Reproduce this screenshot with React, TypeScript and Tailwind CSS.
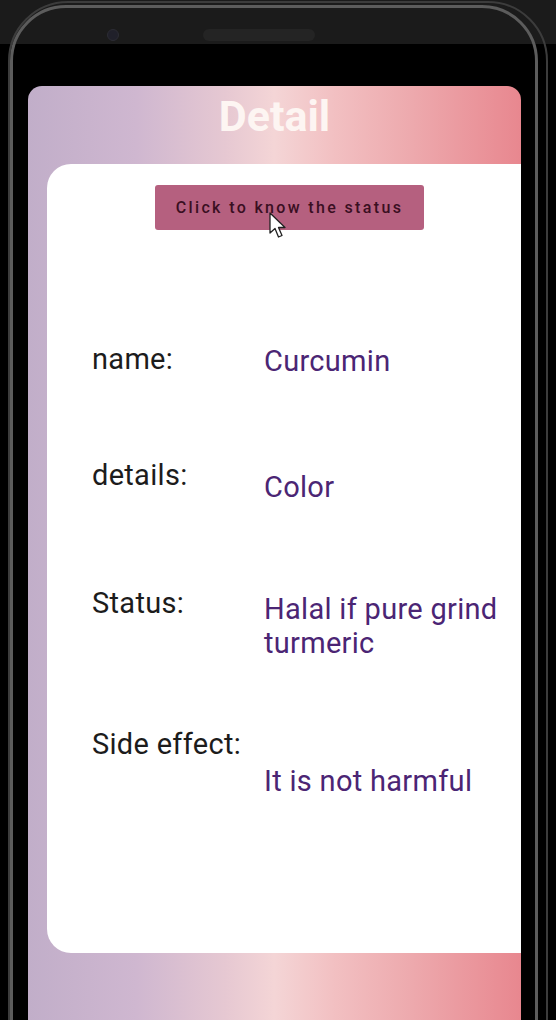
import React from "react";

const rows = [
  { label: "name:", value: "Curcumin", h: "h-[116px]", off: "mt-[1px]" },
  { label: "details:", value: "Color", h: "h-[128px]", off: "mt-[11px]" },
  { label: "Status:", value: "Halal if pure grind turmeric", h: "h-[141px]", off: "mt-[5px]" },
  { label: "Side effect:", value: "It is not harmful", h: "h-[80px]", off: "mt-[36px]" },
];

export default function App() {
  return (
    <div
      className="relative w-[556px] h-[1020px] bg-black overflow-hidden"
      style={{ fontFamily: "Roboto, 'Noto Sans', sans-serif" }}
    >
      <div className="h-[44px] bg-[#1b1b1b]" />

      {/* screen */}
      <div className="mt-[42px] ml-[28px] w-[493px] h-[934px] rounded-t-[14px] overflow-hidden bg-[linear-gradient(90deg,#c1aec9_0%,#cfb7d0_22%,#e6c8d2_40%,#f4d5d6_50%,#f2c0c2_62%,#eda9ad_78%,#e8878f_100%)]">
        <div className="pt-[7px] text-center text-[43px] font-bold leading-[47px] text-[#fdf5f2]">
          Detail
        </div>
        <div className="mt-[24px] ml-[19px] w-[500px] h-[789px] rounded-[24px] bg-white flex flex-col">
          <div className="mt-[21px] ml-[108px] w-[269px] h-[45px] rounded-[3px] bg-[#b5607f] flex items-center justify-center text-[16px] font-medium tracking-[2.35px] text-[#3a0f22]">
            Click to know the status
          </div>
          <div className="mt-[113px] ml-[45px] flex flex-col">
            {rows.map((r) => (
              <div key={r.label} className={`grid grid-cols-[172px_250px] items-start ${r.h}`}>
                <div className="text-[29px] leading-[33px] tracking-[0.3px] text-[#1c1c1c]">{r.label}</div>
                <div className={`text-[29px] leading-[34px] tracking-[0.3px] text-[#4b2574] ${r.off}`}>{r.value}</div>
              </div>
            ))}
          </div>
        </div>
      </div>

      {/* phone frame lines */}
      <div className="absolute left-[8px] right-[8px] top-[1px] h-[1200px] rounded-[60px] border-[2px] border-[#3c3c3c] pointer-events-none" />
      <div className="absolute left-[10px] right-[18px] top-[5px] h-[1200px] rounded-[56px] border-[3px] border-[#5c5c5c] pointer-events-none" />

      {/* camera and speaker */}
      <div className="absolute left-[107px] top-[29px] w-[12px] h-[12px] rounded-full bg-[#20202a] border border-[#2c2c34]" />
      <div className="absolute left-[203px] top-[29px] w-[112px] h-[12px] rounded-full bg-[#242424]" />

      {/* mouse cursor */}
      <svg className="absolute left-[269px] top-[212px]" width="20" height="28" viewBox="0 0 20 28">
        <path d="M1 1 L1 21 L6 16.5 L9.5 25 L13 23.5 L9.5 15.5 L16 15.5 Z" fill="#fff" stroke="#222" strokeWidth="1.3" strokeLinejoin="round" />
      </svg>
    </div>
  );
}
